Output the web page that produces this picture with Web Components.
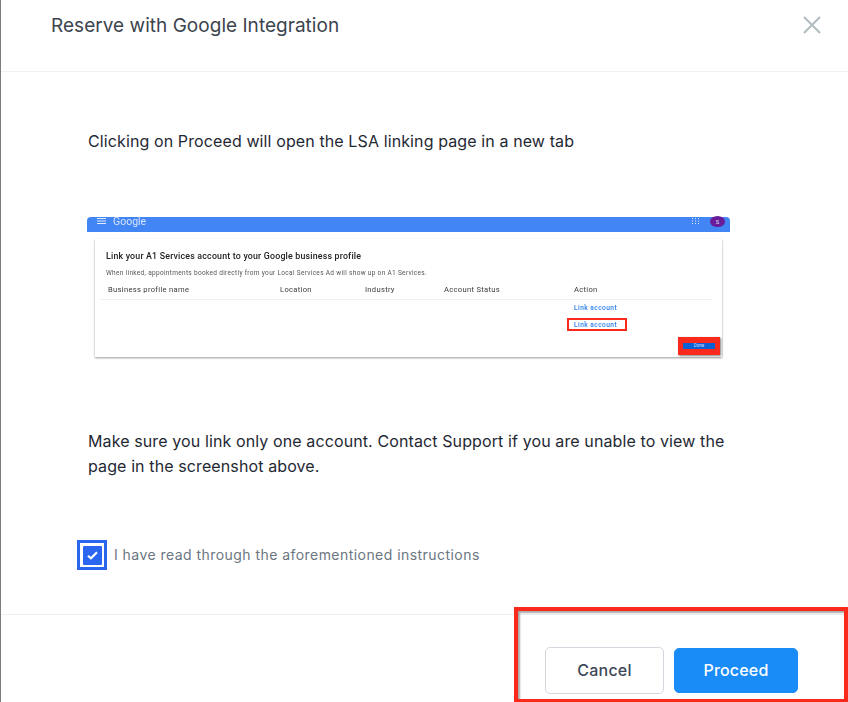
<!DOCTYPE html>
<html>
<head>
<meta charset="utf-8">
<style>
  html, body { margin: 0; height: 100%; background: #fff; overflow: hidden; }
  body { font-family: Inter, "Liberation Sans", sans-serif; }
</style>
</head>
<body>
<rwg-dialog>
  <span slot="title">Reserve with Google Integration</span>
  <p>Clicking on Proceed will open the LSA linking page in a new tab</p>
  <lsa-shot></lsa-shot>
  <p>Make sure you link only one account. Contact Support if you are unable to view the page in the screenshot above.</p>
  <rwg-check>I have read through the aforementioned instructions</rwg-check>
  <rwg-button slot="footer">Cancel</rwg-button>
  <rwg-button slot="footer" primary>Proceed</rwg-button>
</rwg-dialog>

<script>
class RwgDialog extends HTMLElement {
  constructor() {
    super();
    this.attachShadow({ mode: 'open' }).innerHTML = /*html*/ `
      <style>
        :host {
          display: flex;
          flex-direction: column;
          position: relative;
          height: 702px;
          box-sizing: border-box;
          border-left: 1px solid #7d7d80;
          color: #1f2933;
        }
        header {
          height: 72px;
          flex: none;
          box-sizing: border-box;
          display: flex;
          justify-content: space-between;
          padding: 15px 26px 0 50px;
          border-bottom: 1px solid #edf1f5;
          font-size: 19px;
          letter-spacing: .03px;
          line-height: 22px;
          color: #3c444d;
        }
        main {
          flex: 1;
          padding: 57px 0 0 87px;
          display: flex;
          flex-direction: column;
        }
        ::slotted(p) {
          margin: 0;
          font-size: 16px;
          line-height: 25px;
          letter-spacing: .11px;
          width: 650px;
        }
        footer {
          height: 88px;
          flex: none;
          box-sizing: border-box;
          border-top: 1px solid #edf1f5;
          display: flex;
          justify-content: flex-end;
          gap: 10px;
          padding: 32px 50px 0 0;
        }
        .mark {
          position: absolute;
          left: 513px;
          top: 607px;
          width: 334px;
          height: 95px;
          box-sizing: border-box;
          border: 4px solid #f92a1c;
          border-bottom-width: 3px;
          box-shadow: inset 2px 2px 2px rgba(0,0,0,.35);
          pointer-events: none;
        }
      </style>
      <header>
        <slot name="title"></slot>
        <svg width="20" height="20" viewBox="0 0 20 20" fill="none" stroke="#b3bbc0" stroke-width="2">
          <path d="M2 2 L18 18 M18 2 L2 18"/>
        </svg>
      </header>
      <main><slot></slot></main>
      <footer><slot name="footer"></slot></footer>
      <div class="mark"></div>
    `;
  }
}

class LsaShot extends HTMLElement {
  constructor() {
    super();
    this.attachShadow({ mode: 'open' }).innerHTML = /*html*/ `
      <style>
        :host {
          display: block;
          position: relative;
          width: 643px;
          height: 142px;
          margin: 63px 0 70px -1px;
          font-family: Roboto, "Liberation Sans", sans-serif;
          color: #3b3b3b;
          flex: none;
        }
        .inner { filter: blur(.5px); height: 100%; }
        .bar {
          height: 15px;
          background: #4285f4;
          border-radius: 4px 4px 0 0;
          color: #d5e3fb;
          display: flex;
          align-items: center;
          justify-content: space-between;
          padding: 0 5px 0 10px;
          font-size: 10.5px;
          line-height: 9px;
        }
        .bar .left, .bar .right { display: flex; align-items: center; margin-top: -7px; }
        .bar .left { gap: 7px; }
        .bar .right { gap: 11px; }
        .avatar {
          width: 15px;
          height: 11px;
          line-height: 11px;
          border-radius: 50%;
          background: #6a1b9a;
          text-align: center;
          font-size: 6px;
          margin-top: 1px;
        }
        .card {
          margin: 7px 8px 0 8px;
          height: 118px;
          box-sizing: border-box;
          padding: 12px 10px 0 11px;
          background: #fff;
          box-shadow: 0 1px 2px rgba(0,0,0,.4);
        }
        h4 { margin: 0; font-size: 8.8px; letter-spacing: .2px; line-height: 10px; font-weight: 500; color: #222; }
        .sub { font-size: 6.5px; letter-spacing: .32px; line-height: 8px; margin-top: 8px; color: #555; }
        .grid {
          display: grid;
          grid-template-columns: 172px 85px 79px 130px 1fr;
          font-size: 7.6px;
          letter-spacing: .3px;
          line-height: 9px;
          margin-top: 8px;
        }
        .grid > div { padding-left: 2px; }
        .rule { grid-column: 1 / -1; height: 1px; background: #f0f0f0; margin: 5px 0 4px -5px; padding: 0; }
        .link { grid-column: 5; color: #2a7de9; font-size: 6.6px; letter-spacing: .45px; font-weight: 500; line-height: 9px; margin-bottom: 8px; }
        .box {
          position: absolute;
          box-sizing: border-box;
          border: 2px solid #f92a1c;
        }
        .link-box { left: 480px; top: 101px; width: 60px; height: 13px; }
        .done {
          position: absolute;
          left: 591px;
          top: 120px;
          width: 42px;
          height: 18px;
          box-sizing: border-box;
          background: #0d5fd6;
          border: 5px solid #f92a1c;
          border-width: 6px 5px 6px 5px;
          box-shadow: 1px 1px 2px rgba(0,0,0,.5);
          color: #cfe0fb;
          font-size: 4.5px;
          line-height: 6px;
          text-align: center;
        }
      </style>
      <div class="inner">
        <div class="bar">
          <span class="left">
            <svg width="9" height="6" viewBox="0 0 9 6" stroke="#e3ecfd" stroke-width="1"><path d="M0 .5h9M0 3h9M0 5.5h9"/></svg>
            <span>Google</span>
          </span>
          <span class="right">
            <svg width="7" height="6" viewBox="0 0 7 6" fill="#dfe9fc"><path d="M0 0h1v1H0zM3 0h1v1H3zM6 0h1v1H6zM0 2.5h1v1H0zM3 2.5h1v1H3zM6 2.5h1v1H6zM0 5h1v1H0zM3 5h1v1H3zM6 5h1v1H6z"/></svg>
            <span class="avatar">S</span>
          </span>
        </div>
        <div class="card">
          <h4>Link your A1 Services account to your Google business profile</h4>
          <div class="sub">When linked, appointments booked directly from your Local Services Ad will show up on A1 Services.</div>
          <div class="grid">
            <div>Business profile name</div><div>Location</div><div>Industry</div><div>Account Status</div><div>Action</div>
            <div class="rule"></div>
            <div class="link">Link account</div>
            <div class="link">Link account</div>
          </div>
        </div>
      </div>
      <div class="box link-box"></div>
      <div class="done">Done</div>
    `;
  }
}

class RwgCheck extends HTMLElement {
  constructor() {
    super();
    this.attachShadow({ mode: 'open' }).innerHTML = /*html*/ `
      <style>
        :host {
          display: flex;
          align-items: center;
          gap: 7px;
          margin: 61px 0 0 -11px;
          font-size: 14px;
          letter-spacing: .45px;
          color: #6b7681;
        }
        .box {
          width: 30px;
          height: 30px;
          box-sizing: border-box;
          border: 3px solid #2a66f0;
          padding: 2.5px;
          flex: none;
        }
        .fill {
          display: flex;
          height: 100%;
          background: #2a66f0;
          border-radius: 1px;
          align-items: center;
          justify-content: center;
        }
        .label { padding-bottom: 2px; }
      </style>
      <span class="box"><span class="fill">
        <svg width="11" height="9" viewBox="0 0 12 10" fill="none" stroke="#fff" stroke-width="2.4">
          <path d="M1 5.2 L4.3 8.2 L11 1.5"/>
        </svg>
      </span></span>
      <span class="label"><slot></slot></span>
    `;
  }
}

class RwgButton extends HTMLElement {
  constructor() {
    super();
    this.attachShadow({ mode: 'open' }).innerHTML = /*html*/ `
      <style>
        :host {
          display: flex;
          align-items: center;
          justify-content: center;
          box-sizing: border-box;
          width: 119px;
          height: 47px;
          padding-bottom: 2px;
          background: #fff;
          border: 1px solid #d3d8de;
          border-radius: 5px;
          font-size: 16px;
          font-weight: 500;
          letter-spacing: .2px;
          color: #3c4757;
        }
        :host([primary]) {
          width: 124px;
          height: 45px;
          margin-top: 1px;
          background: #1a8cf7;
          border-color: #1a8cf7;
          color: #fff;
        }
      </style>
      <slot></slot>
    `;
  }
}

customElements.define('rwg-dialog', RwgDialog);
customElements.define('lsa-shot', LsaShot);
customElements.define('rwg-check', RwgCheck);
customElements.define('rwg-button', RwgButton);
</script>
</body>
</html>
